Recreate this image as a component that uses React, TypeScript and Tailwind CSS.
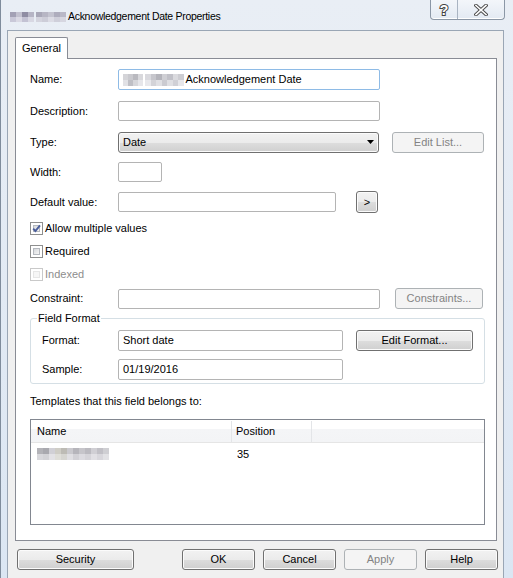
import React from "react";

type Cells = string[][];

function Pixels({ rows, cell }: { rows: Cells; cell: string }) {
  return (
    <div className="flex flex-col">
      {rows.map((r, i) => (
        <div key={i} className="flex">
          {r.map((c, j) => (
            <div key={j} className={`${cell} ${c}`} />
          ))}
        </div>
      ))}
    </div>
  );
}

const titleBlurA: Cells = [
  ["bg-[#a3a1b5]", "bg-[#c2c1cf]", "bg-[#8f8da3]", "bg-[#b6b5c5]"],
  ["bg-[#c9c8d8]", "bg-[#dad9e4]", "bg-[#c3c2d3]", "bg-[#d8d8e3]"],
];
const titleBlurB: Cells = [
  ["bg-[#a9a8b8]", "bg-[#b7b6c4]", "bg-[#c4c4d0]", "bg-[#aeadbd]", "bg-[#b9b8c7]"],
  ["bg-[#d4d4de]", "bg-[#cdcdd8]", "bg-[#dcdce5]", "bg-[#cfcfda]", "bg-[#d6d6e0]"],
];
const nameBlurA: Cells = [
  ["bg-[#d4d4d8]", "bg-[#c9c9ce]", "bg-[#b9b9bf]", "bg-[#d8d8dc]"],
  ["bg-[#e1e1e5]", "bg-[#bfbfc5]", "bg-[#d6d6da]", "bg-[#e6e6ea]"],
];
const nameBlurB: Cells = [
  ["bg-[#d9d9de]", "bg-[#c6c6cc]", "bg-[#b4b4bb]", "bg-[#cfcfd4]", "bg-[#c1c1c8]", "bg-[#dadade]", "bg-[#cdcdd2]"],
  ["bg-[#e8e8ec]", "bg-[#d3d3d8]", "bg-[#e0e0e4]", "bg-[#cbcbd1]", "bg-[#dfdfe3]", "bg-[#d0d0d6]", "bg-[#e6e6ea]"],
];
const rowBlur: Cells = [
  ["bg-[#b3b3b8]", "bg-[#a9a9af]", "bg-[#d1d0d6]", "bg-[#cfcdc6]", "bg-[#bdbbb5]", "bg-[#cac9ce]", "bg-[#b6b5bb]", "bg-[#c6c5ca]", "bg-[#bbbac0]", "bg-[#d0cfd4]", "bg-[#c1c0c6]", "bg-[#cfcfd3]"],
  ["bg-[#d8d8dc]", "bg-[#d3d3d7]", "bg-[#e3e2e6]", "bg-[#dfded9]", "bg-[#d6d5d1]", "bg-[#e0dfe3]", "bg-[#d2d1d6]", "bg-[#dcdbe0]", "bg-[#d5d4d9]", "bg-[#e1e0e4]", "bg-[#d8d7dc]", "bg-[#e2e2e5]"],
];

function Button({
  label,
  w,
  disabled,
  className = "",
}: {
  label: string;
  w: string;
  disabled?: boolean;
  className?: string;
}) {
  return (
    <div
      className={`flex h-[21px] shrink-0 items-center justify-center rounded-[3px] border ${w} ${className} ${
        disabled
          ? "border-[#adb2b5] bg-[#f4f4f4] text-[#838383]"
          : "border-[#707070] bg-[linear-gradient(#f2f2f2_0%,#ebebeb_50%,#dddddd_51%,#cfcfcf_100%)] text-black shadow-[inset_0_0_0_1px_#fbfbfb]"
      }`}
    >
      {label}
    </div>
  );
}

function TextBox({
  w,
  h = "h-[21px]",
  focused,
  children,
}: {
  w: string;
  h?: string;
  focused?: boolean;
  children?: React.ReactNode;
}) {
  return (
    <div
      className={`flex shrink-0 items-center rounded-[2px] border bg-white pl-[4px] ${w} ${h} ${
        focused ? "border-[#8ebbe6]" : "border-[#b4b4b4]"
      }`}
    >
      {children}
    </div>
  );
}

function Label({ children, w = "w-[88px]" }: { children: React.ReactNode; w?: string }) {
  return <div className={`shrink-0 ${w}`}>{children}</div>;
}

function Check({
  label,
  checked,
  disabled,
  className = "",
}: {
  label: string;
  checked?: boolean;
  disabled?: boolean;
  className?: string;
}) {
  return (
    <div className={`flex h-[13px] items-center gap-[2px] ${className}`}>
      <div
        className={`relative h-[13px] w-[13px] border bg-white p-[2px] ${
          disabled ? "border-[#c9c9c9]" : "border-[#8e8f8f]"
        }`}
      >
        <div
          className={`h-full w-full border ${
            disabled
              ? "border-[#e6e6e6] bg-[#f6f6f6]"
              : "border-[#b5b9bf] bg-[linear-gradient(135deg,#d6d8db,#f6f6f6)]"
          }`}
        />
        {checked && (
          <svg viewBox="0 0 11 11" className="absolute left-0 top-0 h-[11px] w-[11px]">
            <path d="M2.2 5.6 L4.4 8 L9 2.4" fill="none" stroke="#4b5e9c" strokeWidth="1.9" />
          </svg>
        )}
      </div>
      <span className={disabled ? "text-[#8d8d8d]" : "text-black"}>{label}</span>
    </div>
  );
}

export default function App() {
  return (
    <div className="flex h-[578px] w-[513px] flex-col overflow-hidden border-l border-[#7f8c9c] bg-[linear-gradient(#e9eef5,#dbe6f3)] font-['Liberation_Sans',Arial,sans-serif] text-[11px] leading-[13px] text-black">
      {/* title bar */}
      <div className="flex h-[30px] shrink-0 items-start justify-between pr-[8px]">
        <div className="flex items-center pl-[9px] pt-[10px]">
          <div className="flex gap-[2px]">
            <Pixels rows={titleBlurA} cell="h-[5px] w-[6px]" />
            <Pixels rows={titleBlurB} cell="h-[5px] w-[6px]" />
          </div>
          <span className="ml-[2px] text-[10.5px] tracking-[-0.3px] text-black">
            Acknowledgement Date Properties
          </span>
        </div>
        <div className="flex h-[20px] rounded-b-[4px] border border-t-0 border-[#8b97a6] bg-[linear-gradient(#f3f6fa,#e3eaf3)] shadow-[inset_0_-1px_0_#ffffff]">
          <div className="flex w-[27px] items-center justify-center border-r border-[#a9b4c2]">
            <span className="text-[14px] font-bold leading-none text-white [-webkit-text-stroke:2px_#444] [paint-order:stroke_fill]">
              ?
            </span>
          </div>
          <div className="flex w-[46px] items-center justify-center">
            <svg viewBox="0 0 14 12" className="h-[12px] w-[14px]">
              <path d="M2 1.5 L12 10.5 M12 1.5 L2 10.5" stroke="#4a4a4a" strokeWidth="3.6" strokeLinecap="square" />
              <path d="M2 1.5 L12 10.5 M12 1.5 L2 10.5" stroke="#ffffff" strokeWidth="1.6" strokeLinecap="square" />
            </svg>
          </div>
        </div>
      </div>

      {/* client area */}
      <div className="ml-[6px] mr-[9px] flex flex-1 flex-col border-x border-t border-[#9aa6b5] bg-[#f0f0f0]">
        <div className="ml-[7px] mr-[6px] mt-[6px]">
          <div className="flex">
            <div className="relative z-10 -mb-px flex h-[22px] w-[53px] items-center justify-center rounded-t-[2px] border border-b-0 border-[#898c95] bg-white">
              General
            </div>
          </div>
          <div className="flex h-[483px] flex-col border border-[#898c95] bg-white pl-[14px] pt-[10px]">
            <div className="flex h-[21px] items-center">
              <Label>Name:</Label>
              <TextBox w="w-[262px]" focused>
                <div className="flex gap-[2px]">
                  <Pixels rows={nameBlurA} cell="h-[6px] w-[5px]" />
                  <Pixels rows={nameBlurB} cell="h-[6px] w-[5.5px]" />
                </div>
                <span className="ml-[2px]">Acknowledgement Date</span>
              </TextBox>
            </div>

            <div className="mt-[11px] flex h-[20px] items-center">
              <Label>Description:</Label>
              <TextBox w="w-[262px]" h="h-[20px]" />
            </div>

            <div className="mt-[10px] flex h-[22px] items-center">
              <Label>Type:</Label>
              <div className="flex h-[21px] w-[261px] shrink-0 items-center justify-between rounded-[3px] border border-[#707070] bg-[linear-gradient(#f2f2f2_0%,#ebebeb_50%,#dddddd_51%,#cfcfcf_100%)] pl-[4px] pr-[4px] shadow-[inset_0_0_0_1px_#fbfbfb]">
                <span>Date</span>
                <svg viewBox="0 0 7 4" className="h-[4px] w-[7px]">
                  <path d="M0 0 H7 L3.5 4 Z" fill="#000" />
                </svg>
              </div>
              <Button label="Edit List..." w="w-[92px]" disabled className="ml-[13px]" />
            </div>

            <div className="mt-[9px] flex h-[20px] items-center">
              <Label>Width:</Label>
              <TextBox w="w-[44px]" h="h-[20px]" />
            </div>

            <div className="mt-[9px] flex h-[22px] items-center">
              <Label>Default value:</Label>
              <TextBox w="w-[218px]" h="h-[20px]" />
              <Button label=">" w="w-[22px]" className="ml-[20px] !h-[22px]" />
            </div>

            <Check label="Allow multiple values" checked className="mt-[9px]" />
            <Check label="Required" className="mt-[10px]" />
            <Check label="Indexed" disabled className="mt-[10px]" />

            <div className="mt-[7px] flex h-[21px] items-center">
              <Label>Constraint:</Label>
              <TextBox w="w-[262px]" h="h-[20px]" />
              <Button label="Constraints..." w="w-[88px]" disabled className="ml-[15px]" />
            </div>

            {/* Field Format group */}
            <div className="relative mt-[9px] flex h-[66px] w-[455px] flex-col rounded-[3px] border border-[#d5dfe5] pl-[11px] pt-[11px]">
              <span className="absolute -top-[7px] left-[6px] bg-white px-[1px]">Field Format</span>
              <div className="flex h-[21px] items-center">
                <Label w="w-[76px]">Format:</Label>
                <TextBox w="w-[225px]">Short date</TextBox>
                <Button label="Edit Format..." w="w-[117px]" className="ml-[13px]" />
              </div>
              <div className="mt-[8px] flex h-[21px] items-center">
                <Label w="w-[76px]">Sample:</Label>
                <TextBox w="w-[225px]">01/19/2016</TextBox>
              </div>
            </div>

            <div className="mt-[11px]">Templates that this field belongs to:</div>

            {/* list view */}
            <div className="mt-[11px] flex h-[106px] w-[455px] flex-col border border-[#828790] bg-white">
              <div className="flex h-[23px] border-b border-[#e5e5e5] bg-[linear-gradient(#ffffff_0%,#ffffff_40%,#f4f5f7_41%,#f3f4f6_100%)] pt-[1px]">
                <div className="flex w-[201px] items-center border-r border-[#e3e5e8] pl-[6px]">Name</div>
                <div className="flex w-[80px] items-center border-r border-[#e3e5e8] pl-[4px]">Position</div>
                <div className="flex-1" />
              </div>
              <div className="flex h-[21px] items-center pt-[1px]">
                <div className="w-[201px] pl-[6px]">
                  <Pixels rows={rowBlur} cell="h-[6px] w-[6px]" />
                </div>
                <div className="pl-[5px]">35</div>
              </div>
            </div>
          </div>
        </div>

        {/* bottom buttons */}
        <div className="mt-[8px] flex">
          <Button label="Security" w="w-[117px]" className="ml-[9px]" />
          <Button label="OK" w="w-[73px]" className="ml-[48px]" />
          <Button label="Cancel" w="w-[73px]" className="ml-[8px]" />
          <Button label="Apply" w="w-[73px]" disabled className="ml-[8px]" />
          <Button label="Help" w="w-[73px]" className="ml-[8px]" />
        </div>
      </div>
    </div>
  );
}
